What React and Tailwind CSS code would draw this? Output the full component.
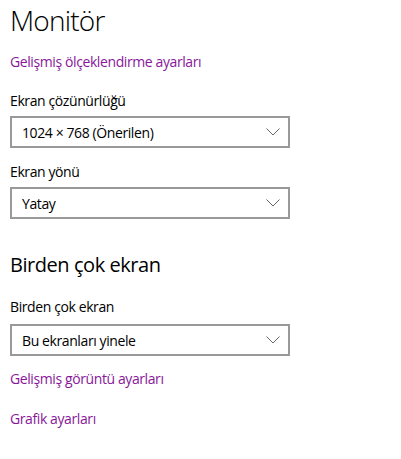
import React from "react";

function Chevron() {
  return (
    <svg width="14" height="8" viewBox="0 0 14 8" className="shrink-0">
      <path d="M0.5 0.5 L7 7 L13.5 0.5" fill="none" stroke="#666" strokeWidth="1" />
    </svg>
  );
}

function Select({ value }) {
  return (
    <div className="w-[280px] h-[32px] border-2 border-[#999999] flex items-center justify-between pl-[10px] pr-[8px] text-[14px] tracking-[-0.4px] text-black">
      <span>{value}</span>
      <Chevron />
    </div>
  );
}

export default function App() {
  return (
    <div
      className="w-[401px] h-[459px] bg-white text-black pl-[10px] flex flex-col"
      style={{ fontFamily: '"Open Sans", "Noto Sans", sans-serif' }}
    >
      <div className="text-[28px] font-light leading-[40px] tracking-[-0.8px]">Monitör</div>
      <div className="text-[14px] leading-[20px] tracking-[-0.4px] text-[#881798] mt-[12px]">Gelişmiş ölçeklendirme ayarları</div>
      <div className="text-[14px] leading-[20px] tracking-[-0.4px] mt-[19px]">Ekran çözünürlüğü</div>
      <div className="mt-[5px]"><Select value="1024 × 768 (Önerilen)" /></div>
      <div className="text-[14px] leading-[20px] tracking-[-0.4px] mt-[14px]">Ekran yönü</div>
      <div className="mt-[5px]"><Select value="Yatay" /></div>
      <div className="text-[20px] leading-[28px] tracking-[-0.45px] mt-[32px]">Birden çok ekran</div>
      <div className="text-[14px] leading-[20px] tracking-[-0.4px] mt-[18px]">Birden çok ekran</div>
      <div className="mt-[7px]"><Select value="Bu ekranları yinele" /></div>
      <div className="text-[14px] leading-[20px] tracking-[-0.4px] text-[#881798] mt-[13px]">Gelişmiş görüntü ayarları</div>
      <div className="text-[14px] leading-[20px] tracking-[-0.4px] text-[#881798] mt-[20px]">Grafik ayarları</div>
    </div>
  );
}
